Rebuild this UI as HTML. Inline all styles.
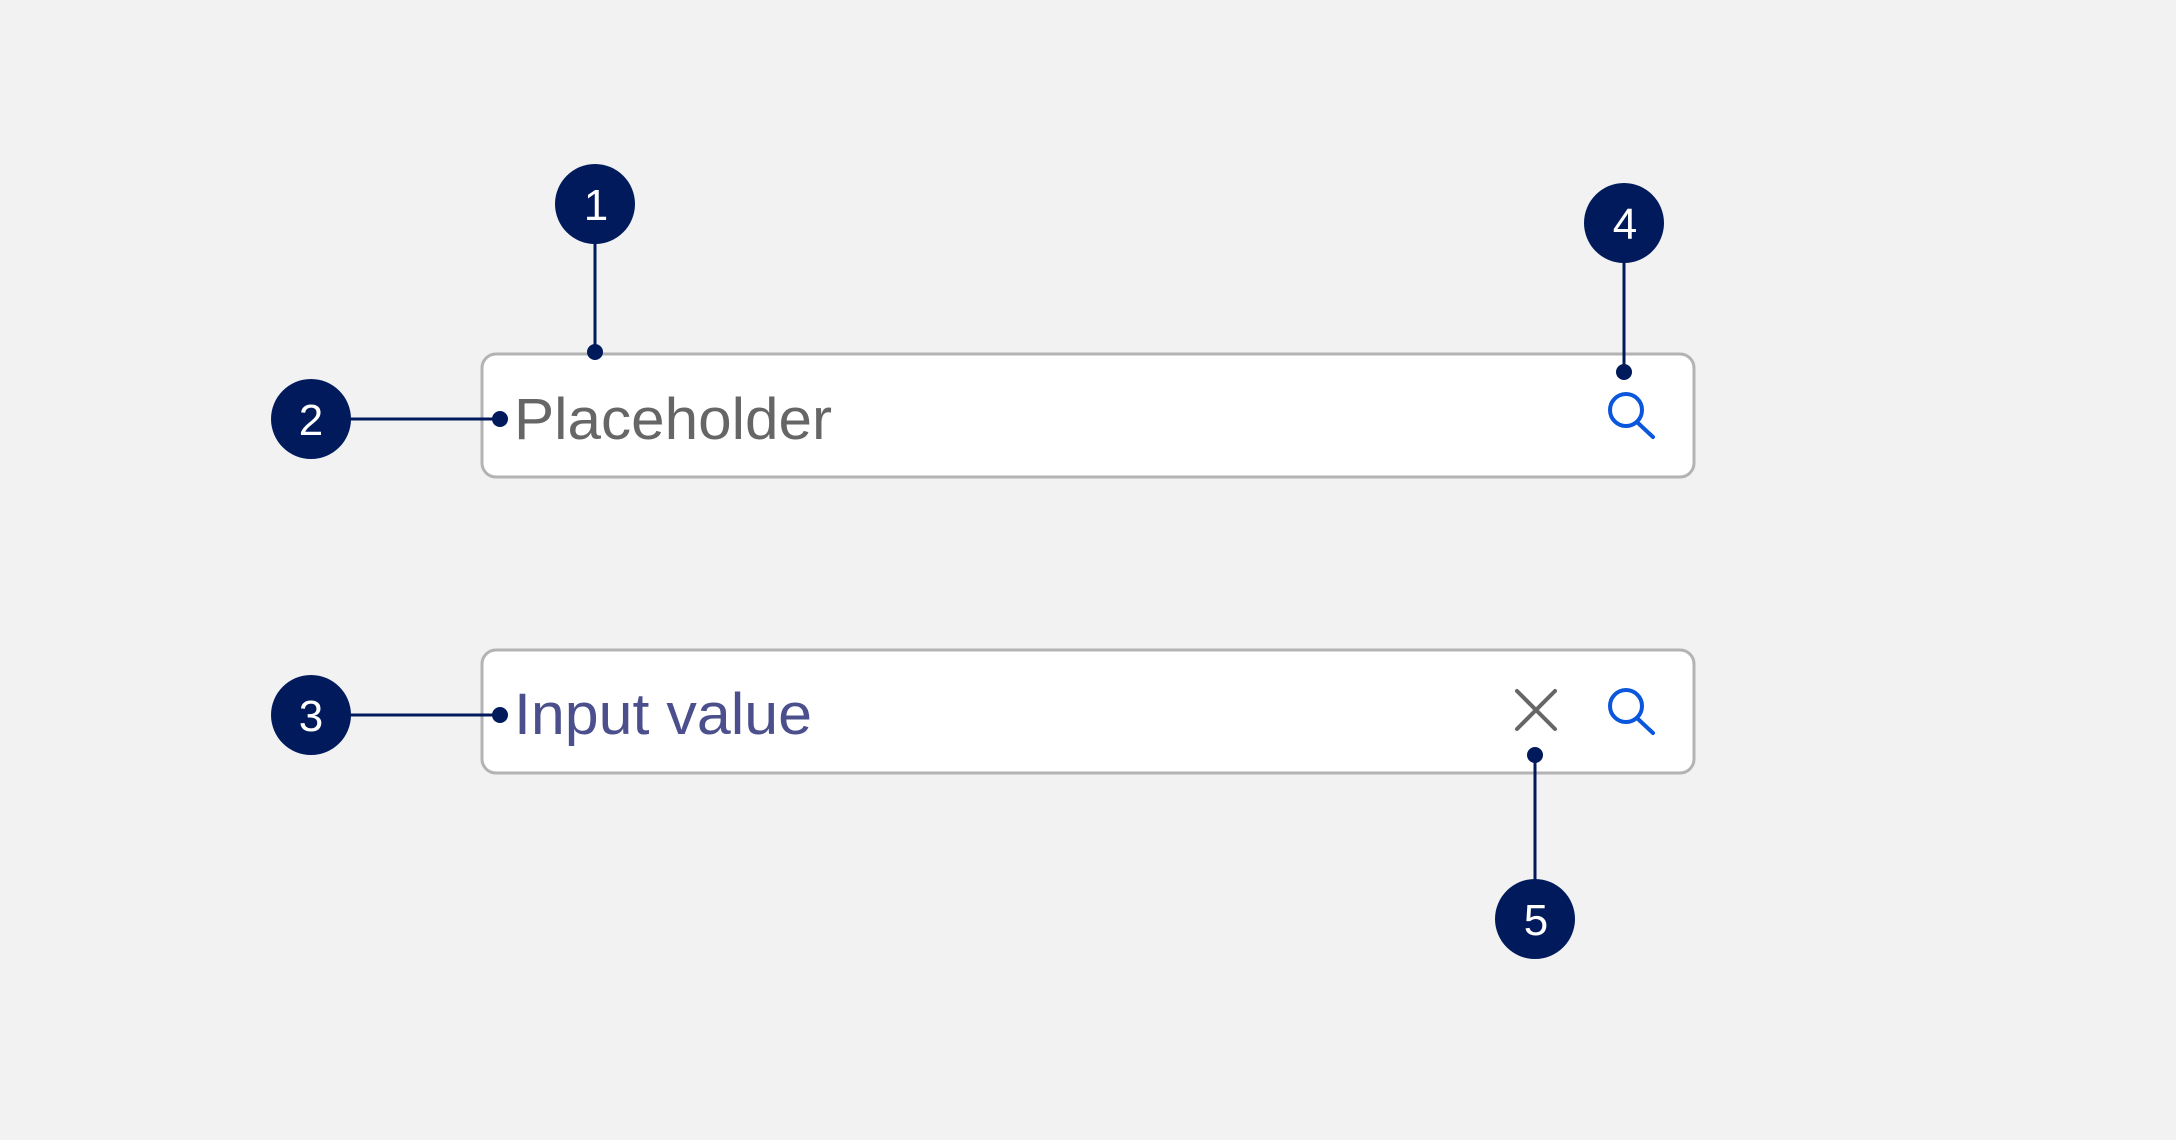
<!DOCTYPE html>
<html><head><style>
body{margin:0;width:2176px;height:1140px;background:#f2f2f2;overflow:hidden;font-family:"Liberation Sans",sans-serif;}
</style></head><body>
<svg width="2176" height="1140" style="position:absolute;left:0;top:0">
<rect x="482" y="354" width="1212" height="123" rx="14" fill="#fff" stroke="#b3b3b3" stroke-width="3"/>
<rect x="482" y="650" width="1212" height="123" rx="14" fill="#fff" stroke="#b3b3b3" stroke-width="3"/>
<text x="514" y="439" font-size="58" fill="#666" font-family="Liberation Sans" textLength="318" lengthAdjust="spacingAndGlyphs">Placeholder</text>
<text x="514" y="734" font-size="58" fill="#4b4f8c" font-family="Liberation Sans" textLength="298" lengthAdjust="spacingAndGlyphs">Input value</text>
<g fill="none" stroke="#0a56dc" stroke-width="4" stroke-linecap="round">
<circle cx="1626" cy="410" r="16"/><line x1="1638" y1="423" x2="1653" y2="437"/>
<circle cx="1626" cy="706" r="16"/><line x1="1638" y1="719" x2="1653" y2="733"/>
</g>
<g stroke="#666" stroke-width="4" stroke-linecap="round">
<line x1="1517" y1="691" x2="1555" y2="729"/><line x1="1555" y1="691" x2="1517" y2="729"/>
</g>
<g stroke="#001a5c" stroke-width="3" fill="#001a5c">
<line x1="595" y1="204" x2="595" y2="352"/>
<line x1="1624" y1="223" x2="1624" y2="372"/>
<line x1="311" y1="419" x2="500" y2="419"/>
<line x1="311" y1="715" x2="500" y2="715"/>
<line x1="1535" y1="755" x2="1535" y2="919"/>
<circle cx="595" cy="352" r="8" stroke="none"/>
<circle cx="1624" cy="372" r="8" stroke="none"/>
<circle cx="500" cy="419" r="8" stroke="none"/>
<circle cx="500" cy="715" r="8" stroke="none"/>
<circle cx="1535" cy="755" r="8" stroke="none"/>
<circle cx="595" cy="204" r="40" stroke="none"/>
<circle cx="1624" cy="223" r="40" stroke="none"/>
<circle cx="311" cy="419" r="40" stroke="none"/>
<circle cx="311" cy="715" r="40" stroke="none"/>
<circle cx="1535" cy="919" r="40" stroke="none"/>
</g>
<g fill="#fff" font-size="44" text-anchor="middle" font-family="Liberation Sans">
<text x="596" y="220">1</text>
<text x="1625" y="239">4</text>
<text x="311" y="435">2</text>
<text x="311" y="731">3</text>
<text x="1536" y="935">5</text>
</g>
</svg>
</body></html>
